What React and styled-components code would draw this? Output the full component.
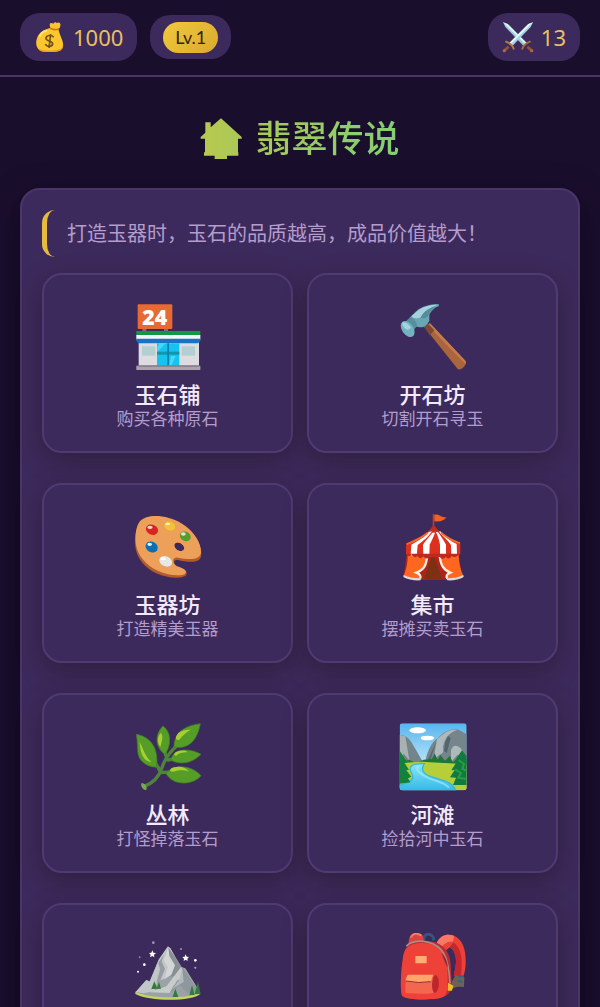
import styled, { createGlobalStyle } from "styled-components"

const GlobalStyle = createGlobalStyle`
* {
  box-sizing: border-box;
}
body {
  margin: 0;
  background: #1a0e2d;
  font-family: "Noto Sans", "Noto Sans CJK SC", sans-serif;
}
`
const Container = styled.div`
height: 100vh;
overflow: hidden;
background: #1a0e2d;
color: #f4eaff;
`
const Header = styled.header`
display: flex;
align-items: center;
justify-content: space-between;
padding: 13px 20px 14px;
border-bottom: 2px solid #4a3568;
`
const Stats = styled.div`
display: flex;
align-items: center;
gap: 13px;
`
const Pill = styled.div`
display: flex;
align-items: center;
gap: 7px;
height: ${(props) => (props.$small ? "44px" : "48px")};
padding: 0 ${(props) => (props.$small ? "13px" : "14px")};
border-radius: 20px;
background: #3d2a5c;
color: #e8c060;
font-size: 22px;
line-height: 32px;
`
const PillIcon = styled.svg`
width: 32px;
height: 32px;
`
const Level = styled.span`
padding: 0 12px;
border-radius: 16px;
background: linear-gradient(135deg, #f0c93c, #dba92e);
color: #33240f;
font-family: Lato, sans-serif;
font-size: 18px;
line-height: 31px;
`
const Main = styled.main`
padding: 38px 20px;
`
const Title = styled.h1`
display: flex;
align-items: center;
justify-content: center;
gap: 12px;
margin: 0 0 25px;
font-size: 36px;
font-weight: 500;
line-height: 48px;
`
const TitleIcon = styled.svg`
width: 43px;
height: 42px;
`
const TitleText = styled.span`
background: linear-gradient(100deg, #a9c958, #82cf74);
background-clip: text;
color: transparent;
`
const Panel = styled.section`
padding: 20px;
border: 2px solid #4b3669;
border-radius: 20px;
background: #3d2a5c;
box-shadow: 0 8px 32px rgba(0, 0, 0, 0.4);
`
const Notice = styled.p`
margin: 0 0 16px;
padding: 10px 20px;
border-left: 5px solid #e6b93f;
border-radius: 13px;
color: #b39dcc;
font-size: 20px;
line-height: 27px;
`
const Grid = styled.div`
display: grid;
grid-template-columns: 1fr 1fr;
gap: 30px 14px;
`
const Card = styled.button`
display: flex;
flex-direction: column;
align-items: center;
justify-content: flex-start;
min-height: 180px;
padding: 28px 12px 20px;
border: 2px solid #503a72;
border-radius: 20px;
background: #3d2a5c;
box-shadow: 0 8px 24px rgba(25, 15, 15, 0.38);
color: #f4eaff;
font-family: "Liberation Sans", "Noto Sans CJK SC", sans-serif;
cursor: pointer;
`
const CardIcon = styled.svg`
width: 68px;
height: 68px;
margin-bottom: 12px;
`
const CardName = styled.span`
font-size: 22px;
font-weight: 500;
line-height: 26px;
`
const CardDesc = styled.span`
color: #b39dcc;
font-size: 17px;
line-height: 22px;
`

const MoneyBag = () => (
  <PillIcon viewBox="102 66 96 96" aria-hidden="true">
    <path d="M153 92c-4-9-5-17-2-19 3-2 6 1 9 1 3-5 8-6 10-2 3-2 8-3 10 1 3 5 1 12-4 18z" fill="#fbc52c" />
    <path d="M151 87c-15 3-33 12-39 28-8 20-1 38 13 41 18 4 41 4 54-1 14-6 12-22 5-38-4-11-7-19-9-28z" fill="#fdc62c" />
    <path d="M187 124c5 18-1 27-17 29-20 3-41 2-55-4 4 8 13 10 28 10 29 1 44-3 46-16 1-7-1-13-2-19z" fill="#eaa01c" />
    <path d="M151 88c9 5 18 5 26 1" stroke="#c4781d" strokeWidth="5" fill="none" />
    <path d="M119 112c4-9 11-15 20-17" stroke="#ffe474" strokeWidth="5" strokeLinecap="round" fill="none" />
    <path d="M161 115c-5-8-21-7-23 2-2 10 21 8 20 18-2 10-18 9-22 0M152 105l-5 42" stroke="#70501e" strokeWidth="5" fill="none" />
  </PillIcon>
)

const Swords = () => (
  <PillIcon viewBox="318 66 96 96" aria-hidden="true">
    <path d="M321 70l14 5 57 57-9 9-55-57z" fill="#9fcbd8" />
    <path d="M321 70l14 5 57 57-4 4z" fill="#d9f4f7" />
    <path d="M394 143l12 11" stroke="#965131" strokeWidth="8" />
    <path d="M379 149c2-8 13-18 23-21" stroke="#a86b38" strokeWidth="6" strokeLinecap="round" fill="none" />
    <path d="M411 70l-14 5-57 57 9 9 55-57z" fill="#a7d2de" />
    <path d="M411 70l-14 5-57 57 4 4z" fill="#e2f7f8" />
    <path d="M338 143l-12 11" stroke="#965131" strokeWidth="8" />
    <path d="M353 149c-2-8-13-18-23-21" stroke="#b97b3d" strokeWidth="6" strokeLinecap="round" fill="none" />
    <circle cx="325" cy="155" r="5" fill="#b36838" />
    <circle cx="407" cy="155" r="5" fill="#b36838" />
  </PillIcon>
)

const House = () => (
  <TitleIcon viewBox="33 57 129 126" aria-hidden="true">
    <defs>
      <linearGradient id="house">
        <stop offset="0" stopColor="#b9c84e" />
        <stop offset="1" stopColor="#aac957" />
      </linearGradient>
    </defs>
    <path d="M49 70h16v15l31-27 62 56v5h-11v41h1v10h-34v10H77v-10H45v-10h3v-41H35v-5l14-13z" fill="url(#house)" />
  </TitleIcon>
)

const Store = () => (
  <CardIcon viewBox="40 38 204 204" aria-hidden="true">
    <path d="M65 114h12v12H65zM130 114h12v12h-12z" fill="#7a7180" />
    <rect x="51" y="42" width="104" height="74" rx="3" fill="#e66a32" />
    <text x="102" y="103" textAnchor="middle" fill="#fff" fontFamily="Open Sans, sans-serif" fontSize="64" fontWeight="800">24</text>
    <path d="M54 154h181v74H54z" fill="#dddce0" />
    <path d="M47 122h192v16H47z" fill="#149647" />
    <path d="M47 134h192v14H47z" fill="#f2f7fa" />
    <path d="M47 145h192v6l-7 8H54l-7-8z" fill="#1972c2" />
    <path d="M109 159h67v68h-67z" fill="#16c2ee" />
    <path d="M109 184h67v9h-67z" fill="#1595a9" />
    <path d="M140 159h5v68h-5z" fill="#077fab" />
    <path d="M117 159l18 0-25 26v-16zM151 197h14l-13 29h-6z" fill="#48d7f4" />
    <path d="M64 168h40v28H64zM183 168h40v28h-40z" fill="#b4cfd1" />
    <path d="M47 226h192v13H47z" fill="#aaa3ad" />
    <path d="M54 225h181v4H54z" fill="#817a89" />
  </CardIcon>
)

const Hammer = () => (
  <CardIcon viewBox="55 38 204 204" aria-hidden="true">
    <path d="M129 108l19-9 106 112c8 9-12 32-23 25z" fill="#aa653d" />
    <path d="M140 103l8-4 106 112c2 3 2 7 0 10z" fill="#c57b50" />
    <path d="M129 108l14-7 18 19-14 15z" fill="#7b4935" />
    <path d="M86 83l22-22c20-15 45-20 67-19l-1 6c-12 3-24 16-28 25v18c-9 17-17 20-29 20-12 0-25-14-31-28z" fill="#69a6b2" />
    <path d="M92 78l22-19c17-12 36-16 58-16-25 9-42 19-52 38-8 5-19 5-28-3z" fill="#a5d3dc" />
    <path d="M120 82c10-22 29-30 51-35-14 6-26 19-29 31-7 6-14 8-22 4z" fill="#548c9c" />
    <path d="M73 95l16-14c12 3 20 15 20 27l-12 13z" fill="#568e9e" />
    <ellipse cx="81" cy="116" rx="17" ry="27" transform="rotate(-35 81 116)" fill="#72b3bf" />
    <path d="M64 98c7-7 19 2 27 14l-10 7c-10-4-16-13-17-21z" fill="#a3d5dd" />
  </CardIcon>
)

const Palette = () => (
  <CardIcon viewBox="40 36 204 204" aria-hidden="true">
    <path fillRule="evenodd" d="M58 65c22-27 81-24 127 5 39 24 57 61 57 89 0 32-41 24-71 18-15-2-13 14-1 20 17 6 31 12 28 22-5 15-52 16-91-2-34-16-58-44-63-79-4-31 3-60 14-73zM161 133c2 16 23 23 29 12 6-15-27-31-29-12z" fill="#b45b2d" />
    <path fillRule="evenodd" d="M58 61c22-24 81-20 126 7 38 23 58 60 57 85-1 27-41 22-70 17-18-2-17 18-2 26 15 4 30 11 26 19-5 12-49 10-84-6-35-16-59-45-65-77-4-31 1-58 12-71zM161 133c2 16 23 23 29 12 6-15-27-31-29-12z" fill="#eca05a" />
    <ellipse cx="94" cy="86" rx="19" ry="15" transform="rotate(25 94 86)" fill="#d82522" />
    <ellipse cx="147" cy="75" rx="17" ry="13" transform="rotate(20 147 75)" fill="#f2c431" />
    <ellipse cx="194" cy="106" rx="17" ry="14" transform="rotate(30 194 106)" fill="#569c30" />
    <ellipse cx="93" cy="138" rx="19" ry="16" transform="rotate(30 93 138)" fill="#0c6fb5" />
    <ellipse cx="135" cy="181" rx="20" ry="15" transform="rotate(25 135 181)" fill="#e7e8e8" />
    <g fill="#fff">
      <ellipse cx="88" cy="79" rx="8" ry="5" opacity=".8" />
      <ellipse cx="141" cy="69" rx="7" ry="4" opacity=".7" />
      <ellipse cx="188" cy="99" rx="7" ry="5" opacity=".8" />
      <ellipse cx="87" cy="130" rx="7" ry="5" opacity=".9" />
      <ellipse cx="127" cy="173" rx="8" ry="5" />
    </g>
  </CardIcon>
)

const Tent = () => (
  <CardIcon viewBox="40 36 204 204" aria-hidden="true">
    <path d="M141 39h5v37h-5z" fill="#bd3d2c" />
    <path d="M146 42c15-6 18 10 36 6-5 10-19 16-36 13z" fill="#f16026" />
    <path d="M64 154h154l11 72-42 10H106l-52-10z" fill="#ad241c" />
    <path d="M142 155l27 78h-54z" fill="#7b3112" />
    <path d="M66 160h57c-1 28-8 46-26 53 9 8 12 15 8 22l-51-10c9-21 13-43 12-65zM219 160h-57c2 28 9 46 28 53-9 8-11 15-7 22l50-10c-10-21-14-43-14-65z" fill="#ff6720" />
    <path d="M124 164c-1 28-9 42-32 51 11 4 15 11 11 18M162 164c3 29 11 42 32 51-11 4-14 11-9 18" stroke="#f5eee3" strokeWidth="7" fill="none" />
    <path d="M54 222c15 7 31 9 51 10v6c-21 1-40-3-52-10zM233 222c-15 7-30 9-49 10v6c21 1 38-3 50-10z" fill="#dadadd" />
    <path d="M144 73c19 27 44 40 80 54v32c-21 12-137 12-163 0v-32c36-15 63-27 83-54z" fill="#dc321d" />
    <path d="M130 92c-12 16-33 27-53 39l-2 32 18 2 3-33c18-12 33-25 43-41zM140 95c-9 12-20 23-28 36l1 35h18l1-35c6-12 12-24 16-36zM151 94c6 12 10 24 12 37v35h18v-35c-7-15-16-27-25-39zM158 91c15 16 28 27 38 41l1 32 17-4-1-31c-20-9-35-22-50-39z" fill="#fff" />
    <path d="M126 95c-16 16-38 24-62 35M167 96c19 16 37 24 56 31" stroke="#f76b2a" strokeWidth="5" fill="none" />
    <path d="M61 158q8 14 16 2 10 15 18 4 9 14 18 2 9 13 18 1h31q9 13 18 0 10 12 18-2 9 9 25-7" fill="#bd2920" />
    <path d="M144 73l21 22q-21-10-39-1z" fill="#c62b20" />
  </CardIcon>
)

const Leaf = () => (
  <CardIcon viewBox="40 35 204 204" aria-hidden="true">
    <path d="M69 226c30-11 46-29 55-57 8-25 21-44 43-64M119 184c21-3 38-2 55 2M142 146l37-8M118 180c-6-15-15-28-23-39M135 132l-4-20" stroke="#4e853b" strokeWidth="10" strokeLinecap="round" fill="none" />
    <path d="M62 216c9-3 19 9 15 19-9 4-18-10-15-19z" fill="#79a754" />
    <g fill="#559d27" stroke="#3f8125" strokeWidth="2">
      <path d="M47 69c35 6 70 34 60 99-31-3-55-18-56-51-1-18-1-32-4-48z" />
      <path d="M127 44c25 17 26 58 6 85-31-21-31-60-6-85z" />
      <path d="M239 37c-7 40-29 79-79 70 0-43 31-64 79-70z" />
      <path d="M241 129c-27 28-64 33-91 17 8-35 55-38 91-17z" />
      <path d="M241 193c-24 29-86 32-105-7 24-28 74-27 105 7z" />
    </g>
    <path d="M57 91c12 24 17 46 36 61-23-2-35-23-36-61zM121 64c9 14 1 30-2 43-12-16-8-33 2-43zM211 55c-15 7-25 18-36 31-16 2-9-16 2-24 12-7 25-7 34-7zM201 123c-17 0-26 3-34 10-11 0-7-9 1-12 14-5 28-5 33 2zM205 181c-14-6-31-5-46 0-18 1-11-10 1-13 16-4 36-1 45 13z" fill="#a5cf32" />
  </CardIcon>
)

const River = () => (
  <CardIcon viewBox="40 35 204 204" aria-hidden="true">
    <defs>
      <clipPath id="frame"><rect x="42" y="36" width="201" height="201" rx="9" /></clipPath>
      <linearGradient id="sky" x2="0" y2="1">
        <stop stopColor="#58b5ee" />
        <stop offset=".7" stopColor="#c8edfb" />
      </linearGradient>
      <linearGradient id="water" x2="0" y2="1">
        <stop stopColor="#8be6fa" />
        <stop offset="1" stopColor="#30b8e5" />
      </linearGradient>
    </defs>
    <g clipPath="url(#frame)">
      <path d="M42 36h201v201H42z" fill="url(#sky)" />
      <ellipse cx="96" cy="57" rx="25" ry="9" fill="#fff" />
      <ellipse cx="125" cy="80" rx="20" ry="7" fill="#fff" />
      <path d="M42 71c12-2 27 8 35 21l36 62H42z" fill="#74848b" />
      <path d="M42 71l17 4 12 72-17-20-12 20z" fill="#a9b2b3" />
      <path d="M119 151c5-31 20-61 37-70 16-20 43-32 63-26l24 14v91H119z" fill="#75858b" />
      <path d="M154 84c22-20 37-31 60-28-26 10-33 22-40 42-5 14 4 25-8 30-11 4-14 15-23 18zM196 117c8-25 30-11 38 8l9 25-27-20-20 22z" fill="#aeb9bb" />
      <path d="M179 91l8-17 8 6-12 46-8-8zM151 93l-16 50-11 9z" fill="#51666f" />
      <path d="M42 151l30-5 19 10 23-11 25-2 8-17 9 19 8-14 14 17 15-15 7 18 43-8v40H42z" fill="#1b7638" />
      <path d="M42 155l68-4 133 8v78H42z" fill="#b6cf38" />
      <path d="M107 157c-26 0-38 8-32 22 8 16 11 24-7 34l-32 11v16h174c-4-28-41-33-71-43-28-10-35-23-23-40z" fill="url(#water)" stroke="#35b8db" strokeWidth="4" />
      <path d="M98 164c-10 11 2 20 19 30 23 15 57 16 73 35" stroke="#a8f0fc" strokeWidth="6" opacity=".6" fill="none" />
      <path d="M42 118l23 35-8 2 13 20-8 2 15 19-10 5 7 12-32 4z" fill="#14803e" />
      <path d="M229 117l-24 34 8 1-16 25 10-1-14 22 18 1-9 22h41V135z" fill="#117b3d" />
      <path d="M219 146l16 12-5 15 13 5M208 174l18 11-8 14 25 4" stroke="#2a9b4b" strokeWidth="6" fill="none" />
    </g>
  </CardIcon>
)

const Mountain = () => (
  <CardIcon viewBox="400 244 204 204" aria-hidden="true">
    <path d="M404 420l195 7c-24 24-158 22-195 0z" fill="#c1d65b" />
    <path d="M405 421l32-36 10 4 27-65 28-40 7 6 33 56 12 4 36 58 9 17c-55 18-152 15-194-4z" fill="#9ba2a7" />
    <path d="M405 421l32-36 10 5 27-66 28-40-12 38 12 24-5 34-27 9-8 29-33 7z" fill="#c1c6c7" />
    <path d="M502 285l-13 39 12 22-9 35 18-10 22-25 8 1-31-57z" fill="#d3d6d5" />
    <path d="M491 307l-8 22 10 23-14 34-11 5 10-38-5-20z" fill="#969da3" />
    <path d="M503 286l39 58-19 29-13 2 13-34-17-28z" fill="#898f96" />
    <path d="M447 422l50-18 45-59 12 34-24 6-23 39z" fill="#c7cbca" />
    <path d="M543 344l52 77-35 3-23-24-29 24 10-21 28-20z" fill="#8f979e" />
    <path d="M545 349l-9 37-21 26 34-22z" fill="#b3b9bc" />
    <path d="M452 412l9-23 8 19 6-18 6 21zM524 411l-8 25h17zM574 401l-8 29h16zM592 390l-10 37h18z" fill="#327a3b" />
    <g fill="#fff">
      <path d="M455 296l3 7 8 1-6 5 1 8-6-4-7 4 2-8-5-5 7-1zM555 308l3 7 7 1-5 5 1 7-6-4-6 4 1-7-5-5 7-1z" />
      <circle cx="431" cy="339" r="4" />
      <circle cx="584" cy="326" r="4" />
      <circle cx="412" cy="360" r="3" />
      <circle cx="458" cy="273" r="4" opacity=".5" />
      <circle cx="417" cy="317" r="3" opacity=".4" />
      <circle cx="541" cy="292" r="3" opacity=".5" />
      <circle cx="584" cy="348" r="3" opacity=".6" />
    </g>
  </CardIcon>
)

const Backpack = () => (
  <CardIcon viewBox="85 244 204 204" aria-hidden="true">
    <path d="M161 265c-6-24 28-23 29 2" stroke="#30577e" strokeWidth="9" fill="none" />
    <path d="M114 285c-2-29 6-42 27-41 16 2 19 12 17 27z" fill="#d9453d" />
    <path d="M120 258c6-14 20-15 32-6" stroke="#fa7866" strokeWidth="6" fill="none" />
    <path d="M198 273c13-23 30-27 52-21 28 12 35 44 35 77 0 21-3 36-8 48l-27-5 6-39c1-23-6-39-19-46l-20 17z" fill="#ed4138" />
    <path d="M198 273c13-23 30-27 52-21l-3 18c-14-3-24 4-34 15z" fill="#fb7964" />
    <path d="M248 272c24 20 29 46 23 102l-21-2 6-39c2-23-6-39-19-46z" fill="#c8262e" />
    <path d="M254 371l27 5-1 30-19-1-19 6v-18z" fill="#706154" />
    <path d="M264 374h14M261 387l14 4" stroke="#2d6685" strokeWidth="7" />
    <path d="M97 323c1-38 21-57 64-56 54 1 76 29 79 70l4 72c-12 28-32 33-72 34-27 2-63 0-76-9-8-7-6-73 1-111z" fill="#b92e32" />
    <path d="M96 325c2-34 20-52 59-51 50 2 68 25 72 58 5 34 7 82-3 99-8 9-27 11-52 12-27 2-63 0-76-9-8-7-6-71 0-109z" fill="#ee4238" />
    <path d="M107 284c12-15 38-19 66-12 42 10 60 38 65 123" stroke="#a88c88" strokeWidth="5" fill="none" />
    <path d="M213 304c10 10 18 27 18 44l-11-24z" fill="#8d2330" />
    <rect x="134" y="313" width="34" height="22" rx="2" fill="#ffad73" />
    <path d="M105 380h90v41q-10 9-91 3z" fill="#f4674f" />
    <path d="M195 369c14 8 13 49-3 56-11-7-11-48 3-56z" fill="#bd262b" />
    <path d="M112 369h76l-8 21q-43 6-75-2 0-13 7-19z" fill="#ffa46b" />
    <path d="M105 388q40 8 75 2" stroke="#9d2928" strokeWidth="3" fill="none" />
    <path d="M232 393l16 9-4 15h-13z" fill="#f4bd25" />
  </CardIcon>
)

const places = [
  { id: "shop", icon: Store, name: "玉石铺", desc: "购买各种原石" },
  { id: "cutting", icon: Hammer, name: "开石坊", desc: "切割开石寻玉" },
  { id: "craft", icon: Palette, name: "玉器坊", desc: "打造精美玉器" },
  { id: "market", icon: Tent, name: "集市", desc: "摆摊买卖玉石" },
  { id: "forest", icon: Leaf, name: "丛林", desc: "打怪掉落玉石" },
  { id: "river", icon: River, name: "河滩", desc: "捡拾河中玉石" },
  { id: "mountain", icon: Mountain, label: "山" },
  { id: "bag", icon: Backpack, label: "背包" },
]

const App = () => {
  return (
    <Container>
      <GlobalStyle />
      <Header>
        <Stats>
          <Pill><MoneyBag />1000</Pill>
          <Pill $small><Level>Lv.1</Level></Pill>
        </Stats>
        <Pill><Swords />13</Pill>
      </Header>
      <Main>
        <Title><House /><TitleText>翡翠传说</TitleText></Title>
        <Panel>
          <Notice>打造玉器时，玉石的品质越高，成品价值越大！</Notice>
          <Grid>
            {places.map(({ id, icon: Icon, name, desc, label }) => (
              <Card key={id} type="button" aria-label={label}>
                <Icon />
                {name && <CardName>{name}</CardName>}
                {desc && <CardDesc>{desc}</CardDesc>}
              </Card>
            ))}
          </Grid>
        </Panel>
      </Main>
    </Container>
  )
}

export default App
